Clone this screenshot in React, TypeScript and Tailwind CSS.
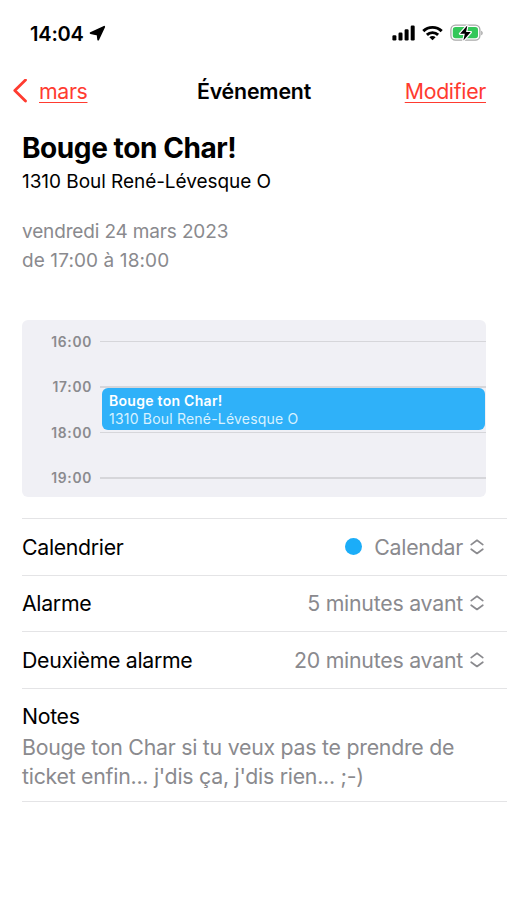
const hours = ["16:00", "17:00", "18:00", "19:00"];

const rows = [
  { label: "Calendrier", value: "Calendar", dot: true },
  { label: "Alarme", value: "5 minutes avant", dot: false },
  { label: "Deuxième alarme", value: "20 minutes avant", dot: false },
];

function LocationArrow() {
  return (
    <svg width="17" height="17" viewBox="0 0 17 17" fill="#000" stroke="#000" strokeWidth="1.8" strokeLinejoin="round">
      <path d="M15.2 1.8L9.2 14.6L8.6 9.6L1.6 8z" />
    </svg>
  );
}

function SignalBars() {
  return (
    <svg width="23" height="16" viewBox="0 0 23 16" fill="#000">
      <rect x="0.4" y="10.2" width="4" height="5.3" rx="1.2" />
      <rect x="6.5" y="7.6" width="4" height="7.9" rx="1.2" />
      <rect x="12.6" y="4.2" width="4" height="11.3" rx="1.2" />
      <rect x="18.7" y="0.5" width="4" height="15" rx="1.2" />
    </svg>
  );
}

function Wifi() {
  return (
    <svg width="21" height="16" viewBox="0 0 21 16" fill="none" stroke="#000" strokeWidth="2.9">
      <path d="M1.3 6.1a13.1 13.1 0 0 1 18.4 0" />
      <path d="M4.9 9.9a8 8 0 0 1 11.2 0" />
      <path d="M10.5 15.2L7.4 12.2a4.4 4.4 0 0 1 6.2 0z" fill="#000" stroke="none" />
    </svg>
  );
}

function Battery() {
  return (
    <svg width="33" height="18" viewBox="0 0 33 18" fill="none">
      <rect x="0.9" y="1.2" width="29" height="15" rx="4.6" stroke="#a9a9a9" strokeWidth="1.3" />
      <path d="M31.2 6.7c2 .6 2 4 0 4.6z" fill="#a9a9a9" />
      <rect x="2.8" y="3.1" width="25.2" height="11.2" rx="2.8" fill="#34c759" />
      <path
        d="M17.3 1.6L10 9.7h4.8L13.4 16.4l7.4-8.3h-4.7z"
        fill="#000"
        stroke="#fff"
        strokeWidth="2.4"
        strokeLinejoin="round"
        paintOrder="stroke"
      />
    </svg>
  );
}

function UpDown() {
  return (
    <svg width="14" height="16" viewBox="0 0 14 16" fill="none" stroke="#8a8a8e" strokeWidth="1.7" strokeLinecap="round" strokeLinejoin="round">
      <path d="M1.2 5.6L7 1.3l5.8 4.3" />
      <path d="M1.2 10.2L7 14.5l5.8-4.3" />
    </svg>
  );
}

export default function App() {
  return (
    <div className="flex h-[900px] w-[507px] flex-col overflow-hidden bg-white font-['Inter',sans-serif] text-black">
      {/* Status bar */}
      <div className="flex h-[66px] items-center justify-between pr-6 pl-[30px]">
        <div className="flex items-center gap-[5px] pt-px">
          <span className="text-[20px] font-semibold tracking-[-0.2px]">14:04</span>
          <LocationArrow />
        </div>
        <div className="flex items-center">
          <SignalBars />
          <div className="mr-[7px] ml-[7px]">
            <Wifi />
          </div>
          <Battery />
        </div>
      </div>

      {/* Navigation */}
      <nav className="grid h-[50px] grid-cols-3 items-center pr-[21px] pl-[13px]">
        <div className="flex items-center gap-3 text-[#ff3b30]">
          <svg width="14" height="24" viewBox="0 0 14 24" fill="none" stroke="currentColor" strokeWidth="2.8" strokeLinecap="round" strokeLinejoin="round">
            <path d="M12.5 1L1.8 11.5l10.7 10.5" />
          </svg>
          <a className="pt-px text-[21.3px] tracking-[-0.35px] underline decoration-[1.3px] underline-offset-[3px]">mars</a>
        </div>
        <h1 className="pt-px pl-[9px] text-center text-[21.3px] font-semibold tracking-[-0.15px]">Événement</h1>
        <a className="pt-px text-right text-[21.3px] tracking-[-0.3px] text-[#ff3b30] underline decoration-[1.3px] underline-offset-[3px]">
          Modifier
        </a>
      </nav>

      {/* Event heading */}
      <section className="pt-[14px] pl-[22px]">
        <h2 className="text-[28px] leading-9 font-bold tracking-[-0.42px]">Bouge ton Char!</h2>
        <p className="mt-px text-[19px] leading-[30px] tracking-[-0.05px]">1310 Boul René-Lévesque O</p>
        <div className="mt-[21px] text-[19px] leading-[28.5px] text-[#8a8a8e]">
          <p className="tracking-[-0.15px]">vendredi 24 mars 2023</p>
          <p className="tracking-[0.1px]">de 17:00 à 18:00</p>
        </div>
      </section>

      {/* Day preview */}
      <section className="relative mt-[45px] mr-[21px] ml-[22px] h-[177px] shrink-0 overflow-hidden rounded-[6px] bg-[#f0f0f5]">
        <div className="-mt-px">
          {hours.map((h) => (
            <div key={h} className="flex h-[45.4px] items-center">
              <span className="w-[70px] pt-px text-right text-[13.8px] font-semibold tracking-[0.7px] text-[#8a8a8e]">{h}</span>
              <span className="ml-2 h-[1.5px] flex-1 bg-[#d6d6da]" />
            </div>
          ))}
        </div>
        <div className="absolute top-[68px] right-[1px] left-[80px] h-[42px] rounded-[6px] bg-[#2fb1f9] pt-[4px] pl-[7px] text-[14px] leading-[18px] text-white">
          <p className="font-semibold tracking-[0.28px]">Bouge ton Char!</p>
          <p className="tracking-[0.2px] text-[#d8f1ff]">1310 Boul René-Lévesque O</p>
        </div>
      </section>

      {/* Settings */}
      <section className="mt-[21px] ml-[22px] text-[21.3px]">
        {rows.map((row) => (
          <div key={row.label} className="flex h-[56.5px] items-center justify-between border-t border-[#e4e4e6] pr-[23px]">
            <span className="pt-[2px] tracking-[-0.32px]">{row.label}</span>
            <div className="flex items-center text-[#8a8a8e]">
              {row.dot && <span className="mr-3 h-[17px] w-[17px] rounded-full bg-[#1badf8]" />}
              <span className="pt-[2px] tracking-[-0.24px]">{row.value}</span>
              <span className="ml-[7px]">
                <UpDown />
              </span>
            </div>
          </div>
        ))}
        <div className="h-[114px] border-y border-[#e4e4e6] pt-[12px]">
          <h3 className="leading-[31px] tracking-[-0.32px]">Notes</h3>
          <p className="pt-px leading-[29px] tracking-[-0.25px] text-[#8a8a8e]">
            Bouge ton Char si tu veux pas te prendre de
            <br />
            ticket enfin... j'dis ça, j'dis rien... ;-)
          </p>
        </div>
      </section>
    </div>
  );
}
